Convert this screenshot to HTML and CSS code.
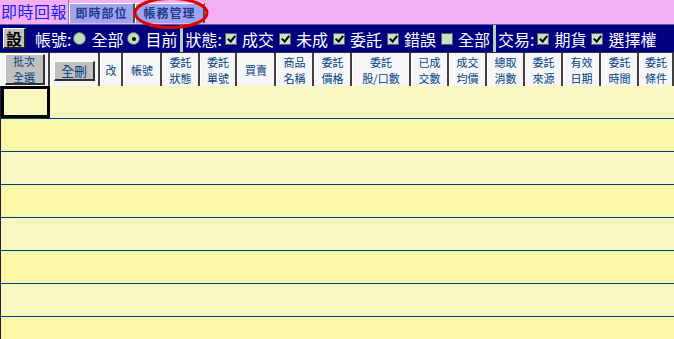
FILE: index.html
```html
<!DOCTYPE html>
<html lang="zh-Hant">
<head>
  <meta charset="UTF-8">
  <title>即時回報</title>
  <link rel="stylesheet" href="styles.css">
</head>
<body>
  <!-- Tabs -->
  <div class="tabbar">
    <div class="title">即時回報</div>
    <div class="tab">即時部位</div>
    <div class="tab tab-wide">帳務管理</div>
    <svg class="mark" width="80" height="34" viewBox="0 0 80 34">
      <ellipse cx="38" cy="16" rx="36" ry="14.5" fill="none" stroke="#e00000" stroke-width="3"/>
    </svg>
  </div>

  <!-- Filter bar -->
  <div class="toolbar">
    <div class="set-btn">設</div>
    <span class="lbl">帳號:</span>
    <span class="radio"></span><span class="opt">全部</span>
    <span class="radio on"></span><span class="opt">目前</span>
    <span class="sep"></span>
    <span class="lbl">狀態:</span>
    <span class="check on"></span><span class="opt">成交</span>
    <span class="check on"></span><span class="opt">未成</span>
    <span class="check on"></span><span class="opt">委託</span>
    <span class="check on"></span><span class="opt">錯誤</span>
    <span class="check"></span><span class="opt">全部</span>
    <span class="sep"></span>
    <span class="lbl">交易:</span>
    <span class="check on"></span><span class="opt">期貨</span>
    <span class="check on"></span><span class="opt">選擇權</span>
  </div>

  <!-- Column headers -->
  <div class="grid head">
    <div class="cell"><div class="btn btn-tall">批次<br>全選</div></div>
    <div class="cell"><div class="btn btn-flat">全刪</div></div>
    <div class="cell">改</div>
    <div class="cell">帳號</div>
    <div class="cell">委託<br>狀態</div>
    <div class="cell">委託<br>單號</div>
    <div class="cell">買賣</div>
    <div class="cell">商品<br>名稱</div>
    <div class="cell">委託<br>價格</div>
    <div class="cell">委託<br>股/口數</div>
    <div class="cell">已成<br>交數</div>
    <div class="cell">成交<br>均價</div>
    <div class="cell">總取<br>消數</div>
    <div class="cell">委託<br>來源</div>
    <div class="cell">有效<br>日期</div>
    <div class="cell">委託<br>時間</div>
    <div class="cell">委託<br>條件</div>
  </div>

  <!-- Rows -->
  <div class="rows">
    <div class="row"><div class="selected"></div></div>
    <div class="row alt"></div>
    <div class="row"></div>
    <div class="row alt"></div>
    <div class="row"></div>
    <div class="row alt"></div>
    <div class="row"></div>
    <div class="row alt"></div>
  </div>
</body>
</html>
```

FILE: styles.css
```css
body {
  margin: 0;
  width: 674px;
  height: 339px;
  overflow: hidden;
  font-family: "Noto Sans CJK TC", "Liberation Sans", sans-serif;
  background: #f8f8a8;
}

/* tabs */
.tabbar {
  position: relative;
  display: flex;
  align-items: flex-end;
  height: 24px;
  background: #f2b0f2;
}
.title {
  width: 69px;
  height: 24px;
  line-height: 22px;
  padding-left: 1px;
  box-sizing: border-box;
  border-right: 1px solid #808080;
  color: #2020f0;
  font-size: 16px;
  letter-spacing: 0.5px;
}
.tab {
  width: 66px;
  height: 20px;
  margin-bottom: 1px;
  box-sizing: border-box;
  border-top: 1px solid #fff;
  border-left: 1px solid #fff;
  border-right: 2px solid #505050;
  background: #a0a4f0;
  color: #1c3c8c;
  font-size: 12px;
  font-weight: bold;
  line-height: 18px;
  text-align: center;
  letter-spacing: 1px;
}
.tab-wide {
  width: 70px;
}
.mark {
  position: absolute;
  left: 133px;
  top: -3px;
}

/* filter bar */
.toolbar {
  display: flex;
  align-items: center;
  height: 27px;
  background: #000080;
  color: #fff;
  font-size: 16px;
  border-top: 1px solid #6060a0;
}
.set-btn {
  width: 23px;
  height: 21px;
  margin: 0 9px 0 3px;
  box-sizing: border-box;
  border-top: 1px solid #fff;
  border-left: 1px solid #fff;
  border-right: 2px solid #202020;
  border-bottom: 2px solid #202020;
  background: #c0c0c0;
  font-size: 16px;
  font-weight: bold;
  line-height: 18px;
  text-align: center;
  color: #000;
}
.lbl {
  margin-right: 1px;
}
.opt {
  margin-right: 3px;
}
.radio {
  width: 13px;
  height: 13px;
  margin: 0 5px 0 1px;
  box-sizing: border-box;
  border-radius: 50%;
  border: 1px solid #606060;
  background: #c0dcc0;
  position: relative;
}
.radio.on::after {
  content: "";
  position: absolute;
  left: 3.5px;
  top: 3.5px;
  width: 4px;
  height: 4px;
  border-radius: 50%;
  background: #000;
}
.check {
  width: 12px;
  height: 12px;
  margin: 0 5px 0 2px;
  box-sizing: border-box;
  border: 1px solid #606060;
  background: #c8e0c8;
  position: relative;
}
.check.on::after {
  content: "";
  position: absolute;
  left: 3px;
  top: 0px;
  width: 3px;
  height: 6px;
  border-right: 2px solid #000;
  border-bottom: 2px solid #000;
  transform: rotate(40deg);
}
.sep {
  align-self: stretch;
  width: 3px;
  margin: 0 2px 0 0;
  background: #b8d0b8;
}

/* header grid */
.grid {
  display: grid;
  grid-template-columns: 50px 50px 23px 39px 38px 37px 39px 38px 38px 59px 38px 38px 38px 38px 38px 38px 35px;
}
.head {
  height: 34px;
  background: #404040;
  border-top: 1px solid #303030;
  box-sizing: border-box;
}
.cell {
  display: flex;
  align-items: center;
  justify-content: center;
  box-sizing: border-box;
  border-left: 1px solid #fff;
  border-right: 2px solid #404040;
  background: #f6f6f8;
  color: #00407f;
  font-size: 11px;
  line-height: 16px;
  text-align: center;
  white-space: nowrap;
}
.btn {
  box-sizing: border-box;
  border-top: 1px solid #fff;
  border-left: 1px solid #fff;
  border-right: 2px solid #303030;
  border-bottom: 2px solid #303030;
  background: #c0c0c0;
  color: #00407f;
  text-align: center;
}
.btn-tall {
  width: 40px;
  height: 31px;
  font-size: 11px;
  line-height: 16px;
  display: flex;
  flex-direction: column;
  justify-content: center;
  overflow: visible;
}
.btn-flat {
  width: 41px;
  height: 20px;
  font-size: 13px;
  line-height: 17px;
  margin-top: 2px;
}

/* rows */
.rows {
  border-left: 1px solid #202040;
}
.row {
  height: 32px;
  border-bottom: 1px solid #004080;
  background: #f8f8c0;
}
.row.alt {
  background: #f8f8a8;
}
.selected {
  width: 49px;
  height: 32px;
  box-sizing: border-box;
  border: 3px solid #000;
  background: #f8f8c0;
}
```
